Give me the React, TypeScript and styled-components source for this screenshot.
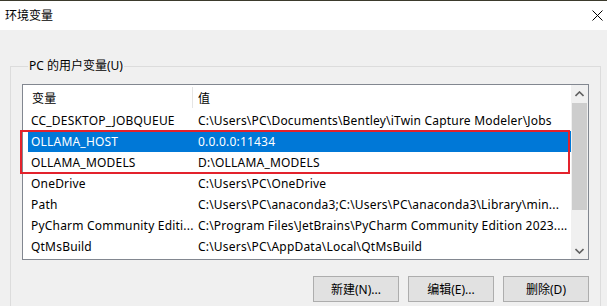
import React from "react";
import styled, { createGlobalStyle } from "styled-components";

const GlobalStyle = createGlobalStyle`
  html, body {
    margin: 0;
    padding: 0;
    width: 607px;
    height: 306px;
    overflow: hidden;
    background: #f0f0f0;
  }
  * {
    box-sizing: border-box;
  }
`;

const FONT = `"Noto Sans", "Noto Sans CJK SC", sans-serif`;

const Window = styled.div`
  width: 607px;
  height: 306px;
  overflow: hidden;
  display: flex;
  flex-direction: column;
  font-family: ${FONT};
  font-size: 12px;
  color: #000;
`;

const DesktopEdge = styled.div`
  height: 1px;
  flex-shrink: 0;
  background: #3b3a2c;
`;

const TitleBar = styled.div`
  height: 29px;
  flex-shrink: 0;
  background: #fff;
  display: flex;
  align-items: center;
  justify-content: space-between;
  padding: 0 4px 0 5px;
`;

const Title = styled.span`
  font-size: 12px;
  line-height: 16px;
  margin-top: 1px;
`;

const CloseIcon = styled.svg`
  width: 11px;
  height: 11px;
  margin-top: -1px;
`;

const Body = styled.div`
  flex: 1;
  min-height: 0;
  overflow: hidden;
  background: #f0f0f0;
  padding: 28px 6px 0 10px;
`;

const GroupBox = styled.fieldset`
  margin: 0;
  height: 300px;
  border: 1px solid #dcdcdc;
  padding: 10px 11px 0 11px;
  min-width: 0;
`;

const GroupLabel = styled.legend`
  font-size: 12px;
  line-height: 16px;
  padding: 0 1px;
  margin-left: 6px;
`;

const ListBox = styled.div`
  height: 176px;
  border: 1px solid #828790;
  background: #fff;
  display: flex;
`;

const Table = styled.div`
  flex: 1;
  min-width: 0;
  display: flex;
  flex-direction: column;
  letter-spacing: 0.2px;
`;

const HeaderRow = styled.div`
  height: 25px;
  flex-shrink: 0;
  display: flex;
  align-items: center;
  padding-left: 5px;
`;

const HeaderCell = styled.div<{ $first?: boolean }>`
  width: ${(p) => (p.$first ? "165px" : "auto")};
  height: 21px;
  display: flex;
  align-items: center;
  padding-left: ${(p) => (p.$first ? "4px" : "5px")};
  border-right: ${(p) => (p.$first ? "1px solid #e5e5e5" : "none")};
`;

const Marked = styled.div`
  position: relative;

  &::after {
    content: "";
    position: absolute;
    left: -3px;
    right: 1px;
    top: -1px;
    bottom: -1px;
    border: 2px solid #e3222c;
    pointer-events: none;
  }
`;

const Row = styled.div<{ $selected?: boolean }>`
  height: 21px;
  flex-shrink: 0;
  margin-left: 5px;
  display: flex;
  align-items: center;
  white-space: nowrap;
  background: ${(p) => (p.$selected ? "#0078d7" : "transparent")};
  color: ${(p) => (p.$selected ? "#fff" : "#000")};
`;

const NameCell = styled.div`
  width: 167px;
  padding-left: 3px;
  overflow: hidden;
`;

const ValueCell = styled.div`
  flex: 1;
  padding-left: 3px;
  overflow: hidden;
`;

const ScrollBar = styled.div`
  width: 17px;
  background: #f0f0f0;
  display: flex;
  flex-direction: column;
  align-items: center;
`;

const ArrowButton = styled.div`
  height: 17px;
  width: 17px;
  flex-shrink: 0;
  display: flex;
  align-items: center;
  justify-content: center;
`;

const Thumb = styled.div`
  width: 15px;
  height: 107px;
  flex-shrink: 0;
  margin-top: 1px;
  background: #cdcdcd;
`;

const Track = styled.div`
  flex: 1;
`;

const ButtonRow = styled.div`
  display: flex;
  justify-content: flex-end;
  gap: 9px;
  margin-top: 16px;
`;

const Button = styled.button`
  width: 86px;
  height: 26px;
  background: #e1e1e1;
  border: 1px solid #adadad;
  font-family: ${FONT};
  font-size: 12px;
  color: #000;
  padding: 0;
`;

const Chevron = ({ up }: { up?: boolean }) => (
  <svg width="9" height="6" viewBox="0 0 9 6">
    <polyline
      points={up ? "0.5,5 4.5,1 8.5,5" : "0.5,1 4.5,5 8.5,1"}
      fill="none"
      stroke="#606060"
      strokeWidth="1.6"
    />
  </svg>
);

const vars = [
  { name: "CC_DESKTOP_JOBQUEUE", value: "C:\\Users\\PC\\Documents\\Bentley\\iTwin Capture Modeler\\Jobs" },
  { name: "OLLAMA_HOST", value: "0.0.0.0:11434", selected: true, marked: true },
  { name: "OLLAMA_MODELS", value: "D:\\OLLAMA_MODELS", marked: true },
  { name: "OneDrive", value: "C:\\Users\\PC\\OneDrive" },
  { name: "Path", value: "C:\\Users\\PC\\anaconda3;C:\\Users\\PC\\anaconda3\\Library\\min..." },
  { name: "PyCharm Community Editi...", value: "C:\\Program Files\\JetBrains\\PyCharm Community Edition 2023...." },
  { name: "QtMsBuild", value: "C:\\Users\\PC\\AppData\\Local\\QtMsBuild" },
];

type Var = (typeof vars)[number];

const VarRow = ({ v }: { v: Var }) => (
  <Row $selected={v.selected}>
    <NameCell>{v.name}</NameCell>
    <ValueCell>{v.value}</ValueCell>
  </Row>
);

export default function App() {
  const before = vars.slice(0, 1);
  const marked = vars.filter((v) => v.marked);
  const after = vars.slice(3);

  return (
    <>
      <GlobalStyle />
      <Window>
        <DesktopEdge />
        <TitleBar>
          <Title>环境变量</Title>
          <CloseIcon viewBox="0 0 11 11">
            <path d="M0.5 0.5 L10.5 10.5 M10.5 0.5 L0.5 10.5" stroke="#000" strokeWidth="1" />
          </CloseIcon>
        </TitleBar>
        <Body>
          <GroupBox>
            <GroupLabel>PC 的用户变量(U)</GroupLabel>
            <ListBox>
              <Table>
                <HeaderRow>
                  <HeaderCell $first>变量</HeaderCell>
                  <HeaderCell>值</HeaderCell>
                </HeaderRow>
                {before.map((v) => (
                  <VarRow key={v.name} v={v} />
                ))}
                <Marked>
                  {marked.map((v) => (
                    <VarRow key={v.name} v={v} />
                  ))}
                </Marked>
                {after.map((v) => (
                  <VarRow key={v.name} v={v} />
                ))}
              </Table>
              <ScrollBar>
                <ArrowButton>
                  <Chevron up />
                </ArrowButton>
                <Thumb />
                <Track />
                <ArrowButton>
                  <Chevron />
                </ArrowButton>
              </ScrollBar>
            </ListBox>
            <ButtonRow>
              <Button>新建(N)...</Button>
              <Button>编辑(E)...</Button>
              <Button>删除(D)</Button>
            </ButtonRow>
          </GroupBox>
        </Body>
      </Window>
    </>
  );
}
